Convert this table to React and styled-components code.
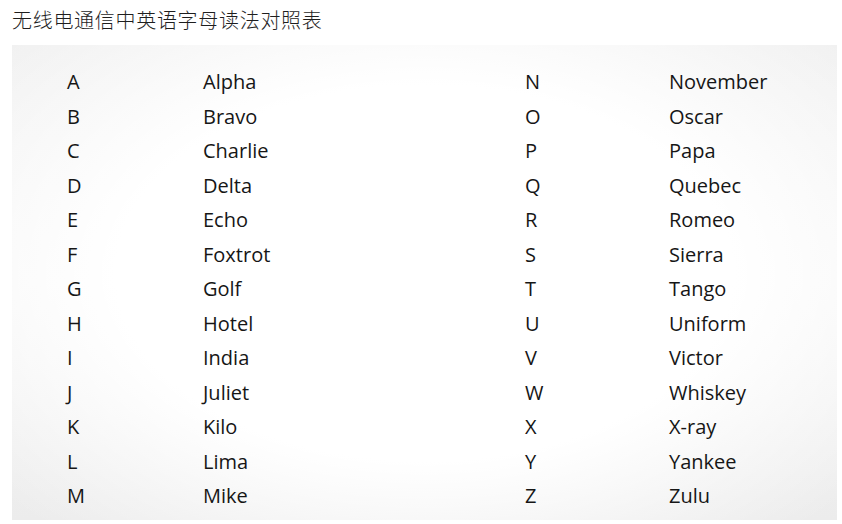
import React from "react"
import styled, { createGlobalStyle } from "styled-components"

const GlobalStyle = createGlobalStyle`
  html, body {
    margin: 0;
    padding: 0;
    background: #ffffff;
  }
`

const Page = styled.div`
  width: 842px;
  height: 524px;
  overflow: hidden;
  background: #ffffff;
`

const Title = styled.h1`
  margin: 0;
  padding: 8px 0 0 12px;
  height: 37px;
  box-sizing: border-box;
  font-family: "Noto Sans CJK SC", sans-serif;
  font-weight: 300;
  font-size: 20px;
  line-height: 24px;
  letter-spacing: 0.7px;
  color: #1e1e1e;
`

const Panel = styled.div`
  margin: 8px 0 0 12px;
  width: 825px;
  height: 475px;
  box-sizing: border-box;
  padding: 20px 0 0 55px;
  background:
    radial-gradient(ellipse 68% 72% at 50% 48%, #ffffff 55%, rgba(255, 255, 255, 0) 100%),
    linear-gradient(180deg, #f1f1f1 0%, #f6f6f6 50%, #ececec 100%);
`

const Grid = styled.div`
  display: grid;
  grid-template-columns: 136px 322px 144px 1fr;
  grid-auto-rows: 34.5px;
  align-items: center;
  font-family: "Open Sans", "Noto Sans", sans-serif;
  font-size: 20px;
  color: #161616;
`

const Letter = styled.div`
  line-height: 34.5px;
`

const Word = styled.div`
  line-height: 34.5px;
`

const left = [
  ["A", "Alpha"], ["B", "Bravo"], ["C", "Charlie"], ["D", "Delta"],
  ["E", "Echo"], ["F", "Foxtrot"], ["G", "Golf"], ["H", "Hotel"],
  ["I", "India"], ["J", "Juliet"], ["K", "Kilo"], ["L", "Lima"], ["M", "Mike"],
]

const right = [
  ["N", "November"], ["O", "Oscar"], ["P", "Papa"], ["Q", "Quebec"],
  ["R", "Romeo"], ["S", "Sierra"], ["T", "Tango"], ["U", "Uniform"],
  ["V", "Victor"], ["W", "Whiskey"], ["X", "X-ray"], ["Y", "Yankee"], ["Z", "Zulu"],
]

export default function App() {
  return (
    <Page>
      <GlobalStyle />
      <Title>无线电通信中英语字母读法对照表</Title>
      <Panel>
        <Grid>
          {left.map(([l, w], i) => (
            <React.Fragment key={l}>
              <Letter>{l}</Letter>
              <Word>{w}</Word>
              <Letter>{right[i][0]}</Letter>
              <Word>{right[i][1]}</Word>
            </React.Fragment>
          ))}
        </Grid>
      </Panel>
    </Page>
  )
}
